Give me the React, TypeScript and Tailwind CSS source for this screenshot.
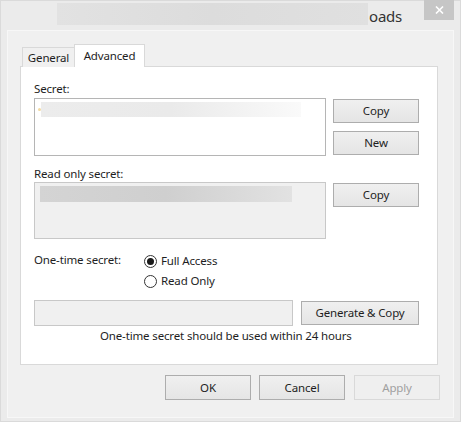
import React from "react";

const font = { fontFamily: '"Noto Sans", "Open Sans", Arial, sans-serif' };

function Btn({ children, className = "", disabled = false }: { children: React.ReactNode; className?: string; disabled?: boolean }) {
  return (
    <div
      className={
        "flex items-center justify-center text-[11.5px] tracking-[-0.15px] leading-none " +
        (disabled
          ? "border border-[#d9d9d9] bg-[#efefef] text-[#a0a0a0] "
          : "border border-[#adadad] bg-gradient-to-b from-[#f0f0f0] to-[#e5e5e5] text-[#1e1e1e] ") +
        className
      }
    >
      {children}
    </div>
  );
}

function Radio({ checked, label }: { checked: boolean; label: string }) {
  return (
    <div className="flex items-center h-[20px]">
      <div className="w-[13px] h-[13px] rounded-full border border-[#333] bg-white flex items-center justify-center mr-[4px]">
        {checked && <div className="w-[7px] h-[7px] rounded-full bg-[#1a1a1a]" />}
      </div>
      <span className="text-[11.5px] tracking-[-0.15px] text-[#1e1e1e]">{label}</span>
    </div>
  );
}

export default function App() {
  return (
    <div style={font} className="w-[461px] h-[422px] bg-[#ebebeb] border border-[#dadada] flex flex-col text-[#1e1e1e]">
      {/* title bar */}
      <div className="h-[29px] flex items-start shrink-0">
        <div className="ml-[56px] mt-[2px] w-[311px] h-[22px] bg-gradient-to-r from-[#e2e2e2] via-[#dcdcdc] to-[#e0e0e0]" />
        <span className="mt-[6px] ml-[1px] text-[15px] leading-[18px] tracking-[-0.2px] text-[#333]">oads</span>
        <div className="ml-auto mr-[6px] -mt-px w-[30px] h-[20px] bg-[#c6c6c6] flex items-center justify-center">
          <svg width="9" height="8" viewBox="0 0 9 8">
            <path d="M1 0.5 L8 7.5 M8 0.5 L1 7.5" stroke="#fff" strokeWidth="1.6" />
          </svg>
        </div>
      </div>
      {/* client area */}
      <div className="ml-[6px] mr-[6px] mb-[3px] flex-1 bg-[#f0f0f0] border border-[#f7f7f7] pl-[12px] pt-[13px] flex flex-col">
        {/* tabs */}
        <div className="flex items-end pl-[2px] h-[23px] relative z-10 -mb-px">
          <div className="w-[53px] h-[20px] border border-[#d9d9d9] border-b-0 bg-[#f0f0f0] flex items-center justify-center text-[11.5px] tracking-[-0.15px]">
            General
          </div>
          <div className="w-[71px] h-[23px] border border-[#d9d9d9] border-b-0 bg-white flex items-start pt-[2px] justify-center text-[11.5px] tracking-[-0.15px] -ml-px">
            Advanced
          </div>
        </div>
        {/* panel */}
        <div className="w-[418px] h-[299px] bg-white border border-[#d9d9d9] pl-[13px] pt-[14px] flex flex-col text-[11.5px] tracking-[-0.15px]">
          <div className="leading-[16px]">Secret:</div>
          <div className="flex mt-[1px]">
            <div className="w-[292px] h-[58px] border border-[#b5b5b5] bg-white relative">
              <div className="absolute left-[3px] top-[9px] w-[3px] h-[3px] rounded-full bg-[#f2d9a0]" />
              <div className="absolute left-[6px] top-[3px] w-[260px] h-[15px] bg-gradient-to-r from-[#ececec] via-[#eaeaea] to-[#fafafa]" />
            </div>
            <div className="ml-[7px] flex flex-col pt-px">
              <Btn className="w-[86px] h-[24px]">Copy</Btn>
              <Btn className="w-[86px] h-[24px] mt-[8px]">New</Btn>
            </div>
          </div>
          <div className="leading-[16px] mt-[10px]">Read only secret:</div>
          <div className="flex">
            <div className="w-[292px] h-[57px] border border-[#c8c8c8] bg-[#f0f0f0] relative">
              <div className="absolute left-[5px] top-[3px] w-[252px] h-[16px] bg-gradient-to-r from-[#d4d4d4] via-[#cfcfcf] to-[#e2e2e2]" />
            </div>
            <div className="ml-[7px] pt-px">
              <Btn className="w-[86px] h-[24px]">Copy</Btn>
            </div>
          </div>
          <div className="flex mt-[12px]">
            <div className="leading-[16px] mt-[1px] w-[110px]">One-time secret:</div>
            <div className="flex flex-col">
              <Radio checked label="Full Access" />
              <Radio checked={false} label="Read Only" />
            </div>
          </div>
          <div className="flex items-center mt-[9px]">
            <div className="w-[259px] h-[26px] border border-[#c8c8c8] bg-[#f0f0f0]" />
            <Btn className="ml-[8px] w-[118px] h-[24px]">Generate &amp; Copy</Btn>
          </div>
          <div className="leading-[16px] mt-[2px] pl-[66px]">One-time secret should be used within 24 hours</div>
        </div>
        {/* bottom buttons */}
        <div className="flex mt-[10px] pl-[145px] gap-[8px]">
          <Btn className="w-[86px] h-[25px]">OK</Btn>
          <Btn className="w-[86px] h-[25px]">Cancel</Btn>
          <Btn disabled className="w-[86px] h-[25px] ml-px">Apply</Btn>
        </div>
      </div>
    </div>
  );
}
